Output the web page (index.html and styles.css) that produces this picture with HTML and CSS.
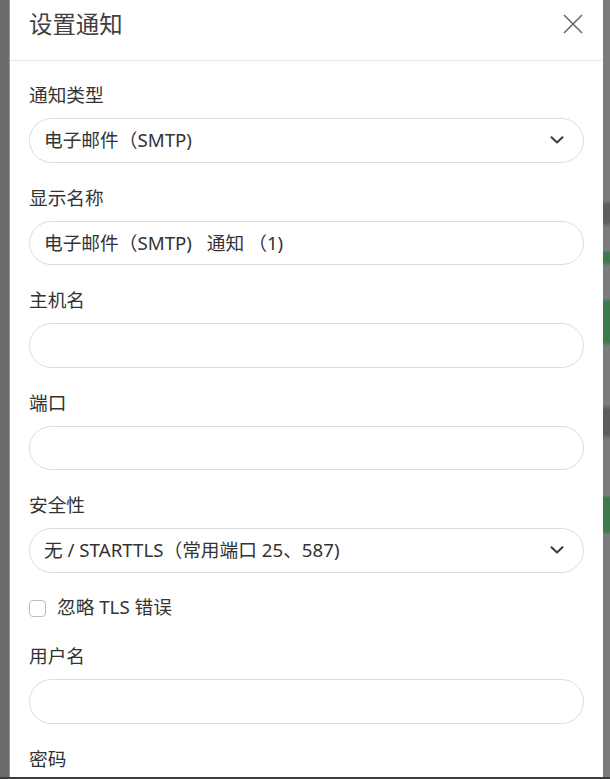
FILE: index.html
```html
<!DOCTYPE html>
<html lang="zh">
<head>
<meta charset="utf-8">
<title>设置通知</title>
<link rel="stylesheet" href="styles.css">
</head>
<body>
<div class="page">
  <div class="strip-left"></div>
  <div class="modal">
    <div class="modal-header">
      <div class="modal-title">设置通知</div>
      <button class="btn-close" aria-label="关闭">
        <svg width="20" height="20" viewBox="0 0 20 20"><path d="M1 1L19 19M19 1L1 19" stroke="#6a6a6a" stroke-width="1.6" fill="none"/></svg>
      </button>
    </div>
    <div class="modal-body">
      <div class="group">
        <div class="label">通知类型</div>
        <div class="control select"><span>电子邮件（SMTP)</span>
          <svg class="chev" width="14" height="8" viewBox="0 0 14 8"><path d="M1.5 1.2L7 6.5L12.5 1.2" stroke="#3a3d40" stroke-width="2" fill="none" stroke-linecap="round" stroke-linejoin="round"/></svg>
        </div>
      </div>
      <div class="group">
        <div class="label">显示名称</div>
        <div class="control"><span class="spaced">电子邮件（SMTP) 通知<span class="paren">（</span>1)</span></div>
      </div>
      <div class="group">
        <div class="label">主机名</div>
        <div class="control"></div>
      </div>
      <div class="group">
        <div class="label">端口</div>
        <div class="control"></div>
      </div>
      <div class="group">
        <div class="label">安全性</div>
        <div class="control select"><span>无 / STARTTLS（常用端口 25、587)</span>
          <svg class="chev" width="14" height="8" viewBox="0 0 14 8"><path d="M1.5 1.2L7 6.5L12.5 1.2" stroke="#3a3d40" stroke-width="2" fill="none" stroke-linecap="round" stroke-linejoin="round"/></svg>
        </div>
      </div>
      <div class="check-row">
        <span class="checkbox"></span>
        <span class="check-label">忽略 TLS 错误</span>
      </div>
      <div class="group">
        <div class="label">用户名</div>
        <div class="control"></div>
      </div>
      <div class="group">
        <div class="label">密码</div>
        <div class="control"></div>
      </div>
    </div>
  </div>
  <div class="strip-right"></div>
</div>
<div class="bottom-line"></div>
</body>
</html>
```

FILE: styles.css
```css
* { box-sizing: border-box; }
html, body {
  margin: 0;
  padding: 0;
  width: 610px;
  height: 779px;
  overflow: hidden;
}
body {
  background: #6f6f6f;
  font-family: "Noto Sans", "Noto Sans CJK SC", sans-serif;
  color: #333;
  font-size: 18.7px;
}
.page {
  display: flex;
  height: 777px;
}
.strip-left {
  width: 10px;
  flex: none;
  background: linear-gradient(to right, #6b6b6b 0, #6b6b6b 9px, #9a9a9a 9px, #9a9a9a 10px);
}
.strip-right {
  width: 7px;
  flex: none;
  background: linear-gradient(to bottom,
    #7c7c7c 0, #7c7c7c 200px,
    #5e5e5e 205px, #5e5e5e 222px,
    #7c7c7c 228px, #7c7c7c 250px,
    #3f7a4e 253px, #3f7a4e 262px,
    #7c7c7c 266px, #7c7c7c 298px,
    #3c7b4c 302px, #3c7b4c 342px,
    #7c7c7c 346px, #7c7c7c 404px,
    #5c5c5c 410px, #5c5c5c 434px,
    #7c7c7c 440px, #7c7c7c 495px,
    #3d7b4d 498px, #3d7b4d 531px,
    #7c7c7c 535px, #7c7c7c 777px);
}
.modal {
  width: 593px;
  flex: none;
  background: #fff;
  overflow: hidden;
  display: flex;
  flex-direction: column;
}
.modal-header {
  height: 61px;
  flex: none;
  border-bottom: 1px solid #e6e6e6;
  padding: 0 20px 12px 19px;
  display: flex;
  align-items: center;
  justify-content: space-between;
}
.modal-title {
  font-size: 23.4px;
  line-height: 32px;
  color: #404040;
}
.btn-close {
  border: 0;
  background: none;
  padding: 0;
  width: 20px;
  height: 20px;
  display: flex;
}
.modal-body {
  padding: 21px 19px 0 19px;
}
.group {
  margin-bottom: 22px;
}
.label {
  line-height: 26px;
  height: 26px;
  margin-bottom: 10px;
  color: #333;
}
.control {
  height: 44.5px;
  border: 1px solid #dcdcdc;
  border-radius: 23px;
  padding: 0 19px 0 14px;
  display: flex;
  align-items: center;
  justify-content: space-between;
  color: #333;
  line-height: 26px;
}
.spaced {
  word-spacing: 10px;
}
.paren {
  margin-left: 4px;
}
.chev {
  flex: none;
}
.check-row {
  display: flex;
  align-items: center;
  gap: 11px;
  height: 26px;
  margin-top: -0.5px;
  margin-bottom: 23px;
}
.checkbox {
  width: 17px;
  height: 17px;
  border: 1px solid #bdbdbd;
  border-radius: 4px;
  background: #fff;
  flex: none;
  margin-top: 3px;
}
.check-label {
  line-height: 26px;
  color: #333;
}
.bottom-line {
  height: 2px;
  background: #3c3c3c;
}
```
